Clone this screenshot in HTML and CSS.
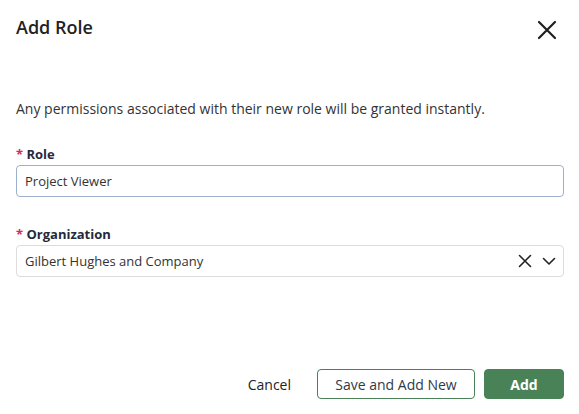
FILE: index.html
```html
<!DOCTYPE html>
<html>
<head>
<meta charset="utf-8">
<link rel="stylesheet" href="styles.css">
</head>
<body>
<div class="dialog">
  <div class="header">
    <h1 class="title">Add Role</h1>
    <button class="close" aria-label="Close">
      <svg width="20" height="20" viewBox="0 0 20 20"><path d="M2 2 L18 18 M18 2 L2 18" stroke="#1f1f1f" stroke-width="2.2" stroke-linecap="round"/></svg>
    </button>
  </div>
  <p class="desc">Any permissions associated with their new role will be granted instantly.</p>
  <div class="field">
    <label class="label"><span class="req">*</span> Role</label>
    <div class="input focus">Project Viewer</div>
  </div>
  <div class="field">
    <label class="label"><span class="req">*</span> Organization</label>
    <div class="input select">
      <span class="value">Gilbert Hughes and Company</span>
      <span class="icons">
        <svg width="14" height="14" viewBox="0 0 14 14"><path d="M1.5 1.5 L12.5 12.5 M12.5 1.5 L1.5 12.5" stroke="#222" stroke-width="1.6" stroke-linecap="round"/></svg>
        <svg width="14" height="14" viewBox="0 0 14 14"><path d="M1.5 4.5 L7 10 L12.5 4.5" stroke="#222" stroke-width="1.6" fill="none" stroke-linecap="round" stroke-linejoin="round"/></svg>
      </span>
    </div>
  </div>
  <div class="footer">
    <button class="btn link">Cancel</button>
    <button class="btn outline">Save and Add New</button>
    <button class="btn primary">Add</button>
  </div>
</div>
</body>
</html>
```
FILE: styles.css
```css
* { box-sizing: border-box; }
html, body { margin: 0; padding: 0; background: #fff; }
body { font-family: "Open Sans", "Noto Sans", sans-serif; color: #2b2b2b; }
.dialog { width: 579px; height: 414px; padding: 0 15px 0 16px; display: flex; flex-direction: column; }
.header { display: flex; align-items: center; justify-content: space-between; height: 58px; padding-bottom: 4px; }
.title { margin: 0; font-size: 18px; font-weight: 600; color: #222; letter-spacing: 0; }
.close { background: none; border: 0; padding: 0; margin-right: 7px; width: 20px; height: 20px; display: flex; margin-top: 6px; }
.desc { margin: 41px 0 0; font-size: 14px; color: #333; line-height: 20px; }
.field { margin-top: 26px; display: flex; flex-direction: column; }
.field + .field { margin-top: 28px; }
.label { font-size: 13px; font-weight: 700; color: #26293b; line-height: 18px; margin-bottom: 2px; }
.req { color: #e0245e; font-weight: 700; }
.input { height: 32px; border: 1px solid #dcdcdc; border-radius: 4px; padding: 0 8px; font-size: 13px; color: #333; display: flex; align-items: center; }
.input.focus { border-color: #9db0c9; }
.select { justify-content: space-between; padding-right: 7px; }
.icons { display: flex; gap: 10px; align-items: center; }
.footer { margin-top: auto; margin-bottom: 15px; display: flex; justify-content: flex-end; align-items: center; gap: 9px; }
.btn { font-family: inherit; font-size: 14px; height: 30px; border-radius: 4px; cursor: pointer; }
.btn.link { background: none; border: 0; color: #222; padding: 0 16px; margin-right: 1px; }
.btn.outline { background: #fff; border: 1px solid #4a7f57; color: #2f3a4a; width: 158px; }
.btn.primary { background: #4a8257; border: 1px solid #4a8257; color: #fff; font-weight: 700; width: 80px; }
```
